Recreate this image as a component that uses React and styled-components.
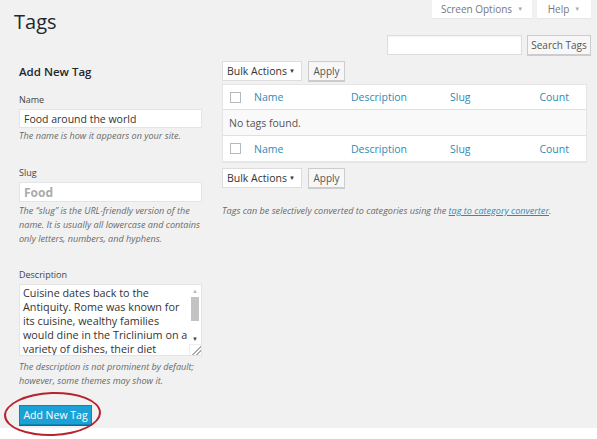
import styled, { createGlobalStyle } from 'styled-components'

const GlobalStyle = createGlobalStyle`
    html {
        overflow: hidden;
    }
    body {
        margin: 0;
        padding: 0;
        min-height: 100vh;
        background: #fff;
        font-family: "Open Sans", "Liberation Sans", sans-serif;
        color: #444;
    }
`

const Wrap = styled.div`
    height: 428px;
    background: #f1f1f1;
    box-sizing: border-box;
    padding: 0 6px 0 14px;
    display: flex;
    flex-direction: column;
`

const Header = styled.div`
    display: flex;
    justify-content: space-between;
    align-items: flex-start;
    height: 35px;
`

const Title = styled.h1`
    margin: 10px 0 0;
    font-size: 20px;
    font-weight: 400;
    line-height: 24px;
    color: #23282d;
`

const Tabs = styled.div`
    display: flex;
    gap: 5px;
`

const Tab = styled.div`
    width: ${p => p.$w}px;
    height: 18px;
    background: #fff;
    box-shadow: 0 1px 1px rgba(0, 0, 0, 0.04);
    display: flex;
    align-items: center;
    justify-content: center;
    gap: 5px;
    font-size: 10px;
    color: #777;
`

const Arrow = styled.span`
    font-size: 6px;
    color: ${p => p.$dark ? '#333' : '#aaa'};
`

const SearchRow = styled.div`
    display: flex;
    justify-content: flex-end;
    gap: 5px;
`

const SearchInput = styled.input`
    width: 135px;
    height: 20px;
    box-sizing: border-box;
    border: 1px solid #ddd;
    background: #fff;
    margin: 0;
    box-shadow: inset 0 1px 2px rgba(0, 0, 0, 0.05);
`

const Button = styled.div`
    width: ${p => p.$w}px;
    height: 20px;
    box-sizing: border-box;
    border: 1px solid #ccc;
    background: #f7f7f7;
    display: flex;
    align-items: center;
    justify-content: center;
    font-size: 10px;
    color: #555;
    box-shadow: 0 1px 0 #ccc;
`

const Columns = styled.div`
    display: flex;
    margin-top: 6px;
`

const LeftCol = styled.div`
    width: 183px;
    margin-left: 5px;
    display: flex;
    flex-direction: column;
`

const RightCol = styled.div`
    flex: 1;
    margin-left: 20px;
    margin-right: 4px;
    display: flex;
    flex-direction: column;
`

const Heading = styled.h2`
    margin: 4px 0 0;
    font-size: 11.5px;
    font-weight: 600;
    line-height: 14px;
    color: #23282d;
`

const Label = styled.label`
    display: block;
    margin-top: ${p => p.$gap}px;
    font-size: 9px;
    line-height: 12px;
    color: #444;
`

const Field = styled.input`
    display: block;
    width: 100%;
    height: ${p => p.$h || 19}px;
    margin: 3px 0 0;
    box-sizing: border-box;
    border: 1px solid #e4e4e4;
    background: #fff;
    padding: 0 4px;
    font-family: inherit;
    font-size: ${p => p.$bold ? '12px' : '10.5px'};
    font-weight: ${p => p.$bold ? 700 : 400};
    color: ${p => p.$bold ? '#aaa' : '#333'};
    outline: none;
`

const Hint = styled.p`
    margin: ${p => p.$gap}px 0 0;
    font-size: 9.1px;
    font-style: italic;
    line-height: 14px;
    color: #6a6a6a;
`

const TextBox = styled.div`
    display: flex;
    height: 72px;
    margin-top: 3px;
    box-sizing: border-box;
    border: 1px solid #e4e4e4;
    background: #fff;
`

const TextArea = styled.textarea`
    flex: 1;
    border: none;
    resize: none;
    overflow: hidden;
    margin: 0;
    padding: 1px 0 0 3px;
    font-family: inherit;
    font-size: 10.8px;
    line-height: 14px;
    color: #333;
    outline: none;
`

const Scroll = styled.div`
    width: 12px;
    display: flex;
    flex-direction: column;
    align-items: center;
    padding-top: 2px;
    box-sizing: border-box;
`

const ScrollArrow = styled.div`
    font-size: 6px;
    line-height: 9px;
    color: ${p => p.$light ? '#bbb' : '#444'};
`

const Thumb = styled.div`
    width: 8px;
    height: 26px;
    background: #c3c3c3;
    margin: 1px 0 14px;
`

const Grip = styled.div`
    margin-top: auto;
    width: 12px;
    height: 12px;
    border-top: 1px solid #eee;
    border-left: 1px solid #eee;
    box-sizing: border-box;
    background: linear-gradient(135deg, transparent 55%, #aaa 56%, #aaa 62%, transparent 63%, transparent 75%, #aaa 76%, #aaa 82%, transparent 83%);
`

const SubmitWrap = styled.div`
    position: relative;
    margin-top: 17px;
    width: 73px;
`

const Primary = styled.div`
    height: 20px;
    box-sizing: border-box;
    background: #1ba1d6;
    border: 1px solid #0d86b8;
    box-shadow: 0 1px 0 #0a6e98;
    color: #fff;
    font-size: 10.5px;
    display: flex;
    align-items: center;
    justify-content: center;
`

const Circle = styled.div`
    position: absolute;
    left: -15px;
    top: -13px;
    width: 97px;
    height: 44px;
    border: 2px solid #b8232d;
    border-radius: 50%;
    box-sizing: border-box;
    transform: rotate(-2deg);
    pointer-events: none;
`

const TableNav = styled.div`
    display: flex;
    gap: 6px;
    margin-top: ${p => p.$gap || 0}px;
`

const Select = styled.div`
    width: 80px;
    height: 20px;
    box-sizing: border-box;
    border: 1px solid #ddd;
    background: #fff;
    display: flex;
    align-items: center;
    justify-content: space-between;
    padding: 0 6px 0 4px;
    font-size: 10.5px;
    color: #333;
`

const Table = styled.div`
    margin-top: 3px;
    border: 1px solid #e5e5e5;
    background: #fff;
    box-shadow: 0 1px 1px rgba(0, 0, 0, 0.04);
`

const Row = styled.div`
    display: grid;
    grid-template-columns: 31px 97px 99px 1fr auto;
    align-items: center;
    height: ${p => p.$h}px;
    padding-right: 17px;
    border-top: ${p => p.$first ? 'none' : '1px solid #e1e1e1'};
    background: ${p => p.$alt ? '#f9f9f9' : '#fff'};
    font-size: 10.5px;
    color: #2e8bb6;
`

const Empty = styled.div`
    grid-column: 1 / -1;
    padding-left: 6px;
    color: #555;
`

const Check = styled.span`
    width: 11px;
    height: 11px;
    margin-left: 7px;
    box-sizing: border-box;
    border: 1px solid #b4b9be;
    background: #fff;
`

const Note = styled.p`
    margin: 16px 0 0;
    font-size: 9.1px;
    font-style: italic;
    line-height: 14px;
    color: #6a6a6a;

    a {
        color: #2e8bb6;
        text-decoration: underline;
    }
`

const BulkNav = ({ gap }) => (
    <TableNav $gap={gap}>
        <Select>Bulk Actions <Arrow $dark>▼</Arrow></Select>
        <Button $w={37}>Apply</Button>
    </TableNav>
)

const HeadRow = ({ first }) => (
    <Row $h={first ? 24 : 25} $first={first}>
        <Check />
        <span>Name</span>
        <span>Description</span>
        <span>Slug</span>
        <span>Count</span>
    </Row>
)

const description = 'Cuisine dates back to the Antiquity. Rome was known for its cuisine, wealthy families would dine in the Triclinium on a variety of dishes, their diet consisted mostly of bread, wine and olive oil.'

const App = () => {
    return (
        <>
            <GlobalStyle />
            <Wrap>
                <Header>
                    <Title>Tags</Title>
                    <Tabs>
                        <Tab $w={100}>Screen Options <Arrow>▼</Arrow></Tab>
                        <Tab $w={54}>Help <Arrow>▼</Arrow></Tab>
                    </Tabs>
                </Header>
                <SearchRow>
                    <SearchInput />
                    <Button $w={64}>Search Tags</Button>
                </SearchRow>
                <Columns>
                    <LeftCol>
                        <Heading>Add New Tag</Heading>
                        <Label $gap={15}>Name</Label>
                        <Field defaultValue="Food around the world" />
                        <Hint $gap={1}>The name is how it appears on your site.</Hint>

                        <Label $gap={24}>Slug</Label>
                        <Field $h={20} $bold defaultValue="Food" />
                        <Hint $gap={2}>
                            The “slug” is the URL-friendly version of the name. It is usually all lowercase and contains only letters, numbers, and hyphens.
                        </Hint>

                        <Label $gap={23}>Description</Label>
                        <TextBox>
                            <TextArea defaultValue={description} />
                            <Scroll>
                                <ScrollArrow $light>▲</ScrollArrow>
                                <Thumb />
                                <ScrollArrow>▼</ScrollArrow>
                                <Grip />
                            </Scroll>
                        </TextBox>
                        <Hint $gap={4}>
                            The description is not prominent by default; however, some themes may show it.
                        </Hint>

                        <SubmitWrap>
                            <Primary>Add New Tag</Primary>
                            <Circle />
                        </SubmitWrap>
                    </LeftCol>

                    <RightCol>
                        <BulkNav />
                        <Table>
                            <HeadRow first />
                            <Row $h={25} $alt>
                                <Empty>No tags found.</Empty>
                            </Row>
                            <HeadRow />
                        </Table>
                        <BulkNav gap={6} />
                        <Note>
                            Tags can be selectively converted to categories using the <a href="#">tag to category converter</a>.
                        </Note>
                    </RightCol>
                </Columns>
            </Wrap>
        </>
    )
}

export default App
